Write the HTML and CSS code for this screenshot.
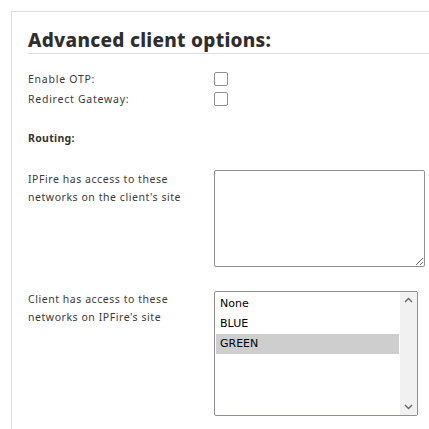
FILE: index.html
```html
<!DOCTYPE html>
<html>
<head>
<meta charset="utf-8">
<link rel="stylesheet" href="styles.css">
</head>
<body>
<div class="card">
  <h2 class="title">Advanced client options:</h2>
  <div class="grid">
    <div class="label">Enable OTP:</div>
    <div class="ctl"><span class="check"></span></div>
    <div class="label">Redirect Gateway:</div>
    <div class="ctl"><span class="check"></span></div>
  </div>
  <div class="section">Routing:</div>
  <div class="row first">
    <div class="desc">IPFire has access to these<br>networks on the client's site</div>
    <textarea class="area"></textarea>
  </div>
  <div class="row second">
    <div class="desc">Client has access to these<br>networks on IPFire's site</div>
    <div class="list">
      <div class="opts">
        <div class="opt">None</div>
        <div class="opt">BLUE</div>
        <div class="opt sel">GREEN</div>
      </div>
      <div class="sbar">
        <svg width="9" height="6" viewBox="0 0 9 6"><path d="M1 5 L4.5 1.5 L8 5" fill="none" stroke="#666" stroke-width="1.4"/></svg>
        <svg width="9" height="6" viewBox="0 0 9 6"><path d="M1 1 L4.5 4.5 L8 1" fill="none" stroke="#666" stroke-width="1.4"/></svg>
      </div>
    </div>
  </div>
</div>
</body>
</html>
```
FILE: styles.css
```css
html, body { margin: 0; padding: 0; background: #fff; }
body { font-family: "Noto Sans", sans-serif; color: #333; }
.card {
  margin: 11px 0 0 11px;
  border-top: 1px solid #ddd;
  border-left: 1px solid #ddd;
  padding: 0 0 20px 16px;
  height: 430px;
  box-sizing: border-box;
}
.title {
  margin: 16px 0 0 0;
  font-size: 19px;
  font-weight: 800;
  color: #2e2e2e;
  line-height: 24px;
  padding-bottom: 1px;
  border-bottom: 1px solid #ddd;
  letter-spacing: 0.27px;
}
.grid {
  display: grid;
  grid-template-columns: 186px auto;
  row-gap: 6px;
  margin-top: 18px;
  align-items: center;
}
.label { font-size: 10.5px; line-height: 14px; letter-spacing: 0.75px; color: #3a3a3a; }
.ctl { display: flex; }
.check {
  width: 12px; height: 12px;
  border: 1px solid #918d9f;
  border-radius: 2px;
  display: block;
}
.section { font-size: 10.5px; font-weight: 700; margin-top: 25px; line-height: 14px; letter-spacing: 0.3px; }
.row { display: flex; align-items: flex-start; }
.row.first { margin-top: 25px; }
.row.second { margin-top: 23px; }
.desc { width: 186px; flex: none; font-size: 10.5px; line-height: 18px; letter-spacing: 0.55px; color: #3a3a3a; }
.area {
  width: 211px; height: 97px; box-sizing: border-box;
  border: 1px solid #918d9f; border-radius: 2px; margin: 0; padding: 0;
  flex: none;
}
.list {
  width: 204px; height: 125px; box-sizing: border-box;
  border: 1px solid #918d9f; border-radius: 2px;
  display: flex; margin-top: 1px; flex: none;
}
.opts { flex: 1; padding: 2px 1px 0 1px; font-family: "DejaVu Sans", sans-serif; font-size: 11px; color: #000; }
.opt { height: 20px; line-height: 20px; padding-left: 4px; }
.opt.sel { background: #cecece; }
.sbar {
  width: 17px; background: #f1f1f1;
  display: flex; flex-direction: column; justify-content: space-between; align-items: center;
  padding: 5px 0 5px;
}
```
